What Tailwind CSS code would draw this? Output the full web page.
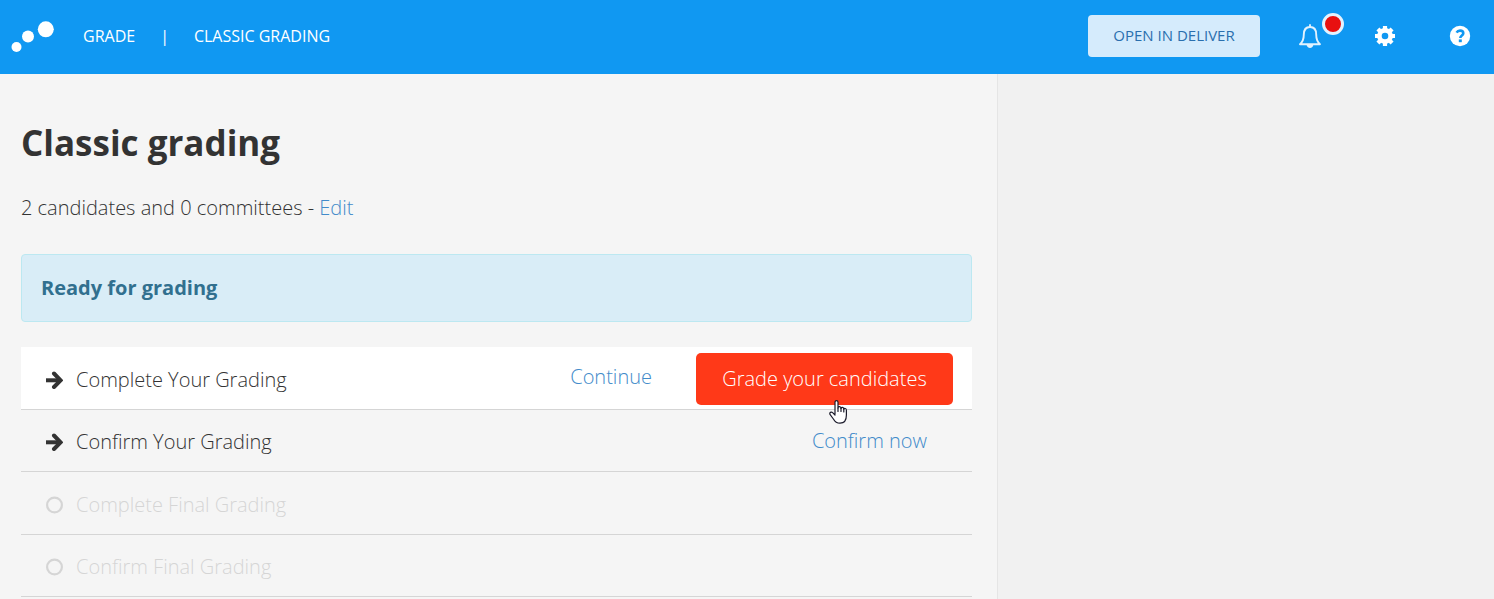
<!DOCTYPE html>
<html lang="en">
<head>
  <meta charset="UTF-8">
  <meta name="viewport" content="width=device-width, initial-scale=1.0">
  <title>Classic grading</title>
  <script src="https://cdn.jsdelivr.net/npm/@tailwindcss/browser@4"></script>
</head>
<body class="bg-[#f1f1f1] font-['Open_Sans',sans-serif] text-[#333] flex flex-col min-h-screen">
  <header class="bg-[#1098f2] text-white h-[74px] shrink-0 flex items-center pb-0.5 pl-[11px] pr-[23px]">
    <a href="#" aria-label="Home" class="mr-[29px]">
      <svg class="w-[43px] h-8" viewBox="0 0 43 32" fill="currentColor">
        <circle cx="5.5" cy="27" r="5"/>
        <circle cx="17" cy="16.5" r="6"/>
        <circle cx="34.8" cy="9.3" r="8"/>
      </svg>
    </a>
    <nav class="flex items-center text-base leading-6">
      <a href="#">GRADE</a>
      <span class="px-[25px]">|</span>
      <a href="#">CLASSIC GRADING</a>
    </nav>

    <div class="ml-auto flex items-center">
      <button class="h-[42px] w-[172px] pb-0.5 rounded bg-[#d5ebfc] text-[#2a6fae] text-[15px]">OPEN IN DELIVER</button>
      <button aria-label="Notifications" class="relative ml-[38px]">
        <svg class="w-6 h-6" viewBox="0 0 24 24" fill="none" stroke="#e3f2fe" stroke-width="1.9" stroke-linejoin="round">
          <path d="M2 20.2 C4.8 17.8 5.8 14.5 5.8 10.5 C5.8 6 8 3 12 3 C16 3 18.2 6 18.2 10.5 C18.2 14.5 19.2 17.8 22 20.2 Z"/>
          <path d="M12 1 V3" stroke-linecap="round"/>
          <path d="M8.6 20.5 H15.4 C15.2 22.8 13.8 24 12 24 C10.2 24 8.8 22.8 8.6 20.5 Z" fill="#e3f2fe" stroke="none"/>
        </svg>
        <span class="absolute -top-[11px] left-6 size-[22px] rounded-full bg-[#e81010] border-[3px] border-[#e3f2fe]"></span>
      </button>
      <button aria-label="Settings" class="ml-[52px]">
        <svg class="w-[22px] h-[22px]" viewBox="0 0 22 22" fill="none" stroke="currentColor">
          <circle cx="11" cy="11" r="5.6" stroke-width="4.6"/>
          <path stroke-width="4.2" d="M11 1 V5 M11 17 V21 M1 11 H5 M17 11 H21 M3.9 3.9 L6.8 6.8 M15.2 15.2 L18.1 18.1 M3.9 18.1 L6.8 15.2 M15.2 6.8 L18.1 3.9"/>
        </svg>
      </button>
      <button aria-label="Help" class="ml-[53px]">
        <svg class="w-[22px] h-[22px]" viewBox="0 0 22 22" fill="none">
          <circle cx="11" cy="11" r="10.2" fill="#fff"/>
          <path d="M7.6 7.7 C8.4 6.2 9.5 5.6 11 5.6 C13 5.6 14.3 6.7 14.3 8.2 C14.3 10.4 11.3 10.5 11.3 13" stroke="#1098f2" stroke-width="2.6"/>
          <path d="M9.8 14.4 H12.8 V17.2 H9.8 Z" fill="#1098f2"/>
        </svg>
      </button>
    </div>
  </header>

  <main class="w-[66.8%] grow bg-[#f5f5f5] border-r border-[#e5e5e5] pl-[21px] pr-[25px] text-xl font-light">
    <h1 class="pt-[44px] text-[35px] leading-[50px] font-bold">Classic grading</h1>
    <p class="mt-[26px] leading-7">2 candidates and 0 committees - <a href="#" class="text-[#428bca]">Edit</a></p>

    <div class="mt-8 h-[68px] px-[19px] flex items-center rounded border border-[#bce8f1] bg-[#d9edf7] text-[#31708f] font-bold">Ready for grading</div>

    <ul class="mt-[25px] leading-7">
      <li class="flex items-center h-[63px] pl-6 pr-[19px] bg-white border-b border-[#d5d5d5]">
        <svg class="w-[18px] h-[18px] mr-[13px] mt-1" viewBox="0 0 18 18" fill="none" stroke="#333" stroke-width="4">
          <path d="M1 9.3 H14"/>
          <path d="M9 2.5 L15.6 9.3 L9 16" stroke-linecap="round"/>
        </svg>
        <span class="mt-1">Complete Your Grading</span>
        <a href="#" class="ml-auto mr-[44px] mb-0.5 text-[#428bca]">Continue</a>
        <div class="relative">
          <button class="block h-[52px] w-[257px] mt-px rounded-[5px] bg-[#ff3918] text-white">Grade your candidates</button>
          <!-- hand pointer -->
          <svg class="absolute left-[133px] top-12 w-5 h-6" viewBox="0 0 20 24" fill="#fff" stroke="#1b1b2b" stroke-width="1.2" stroke-linejoin="round" stroke-linecap="round">
            <path d="M6 14 V2.2 C6 0.1 9 0.1 9 2.2 V8 C9 6.2 12 6.2 12 8.4 C12.2 7 14.8 7 14.8 9.2 C15.2 8 17.4 8.2 17.4 10.2 V15 C17.4 20 15 23.2 11 23.2 C7.5 23.2 5.6 21.2 4.4 19 L1 14.4 C0.2 12.6 2.2 11.4 3.6 12.6 L6 15"/>
            <path d="M9 8 V11.5 M12 8.4 V11.5 M14.8 9.2 V12" fill="none"/>
          </svg>
        </div>
      </li>
      <li class="flex items-center h-[62px] pl-6 pr-[45px] border-b border-[#d5d5d5]">
        <svg class="w-[18px] h-[18px] mr-[13px] mt-0.5" viewBox="0 0 18 18" fill="none" stroke="#333" stroke-width="4">
          <path d="M1 9.3 H14"/>
          <path d="M9 2.5 L15.6 9.3 L9 16" stroke-linecap="round"/>
        </svg>
        <span class="mt-0.5">Confirm Your Grading</span>
        <a href="#" class="ml-auto text-[#428bca]">Confirm now</a>
      </li>
      <li class="flex items-center h-[63px] pl-6 border-b border-[#d5d5d5] text-[#d5d5d5]">
        <svg class="w-[18px] h-[18px] mr-[13px] mt-1" viewBox="0 0 18 18" fill="none" stroke="currentColor" stroke-width="2.2">
          <circle cx="9.5" cy="9" r="7.4"/>
        </svg>
        <span class="mt-1">Complete Final Grading</span>
      </li>
      <li class="flex items-center h-[62px] pl-6 border-b border-[#d5d5d5] text-[#d5d5d5]">
        <svg class="w-[18px] h-[18px] mr-[13px] mt-0.5" viewBox="0 0 18 18" fill="none" stroke="currentColor" stroke-width="2.2">
          <circle cx="9.5" cy="9" r="7.4"/>
        </svg>
        <span class="mt-0.5">Confirm Final Grading</span>
      </li>
    </ul>
  </main>
</body>
</html>
